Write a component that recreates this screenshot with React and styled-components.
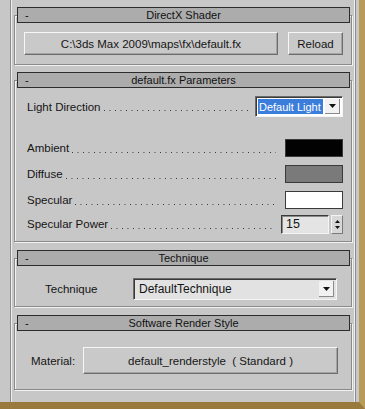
import styled, { createGlobalStyle } from "styled-components";

const GlobalStyle = createGlobalStyle`
  html, body {
    margin: 0;
    padding: 0;
    background: #c7c7c7;
  }
  body {
    font-family: "Liberation Sans", Arial, sans-serif;
    font-size: 11.5px;
    color: #151515;
  }
`;

const DownArrow = ({ w = 7, h = 4 }) => (
  <svg width={w} height={h} viewBox="0 0 7 4">
    <polygon points="0,0 7,0 3.5,4" fill="#111" />
  </svg>
);

const UpArrow = ({ w = 5, h = 3 }) => (
  <svg width={w} height={h} viewBox="0 0 5 3">
    <polygon points="0,3 5,3 2.5,0" fill="#111" />
  </svg>
);

const App = () => {
  return (
    <>
      <GlobalStyle />
      <Frame>
        <Sheet>
          <Rollout>
            <Header>
              <Collapse>-</Collapse>
              <Title>DirectX Shader</Title>
            </Header>
            <Body $pad="16px 8px 9px 9px">
              <ButtonRow>
                <PushButton $h={23} $grow>C:\3ds Max 2009\maps\fx\default.fx</PushButton>
                <PushButton $h={23} $w={55}>Reload</PushButton>
              </ButtonRow>
            </Body>
          </Rollout>

          <Rollout>
            <Header>
              <Collapse>-</Collapse>
              <Title>default.fx Parameters</Title>
            </Header>
            <Body $pad="15px 8px 8px 12px">
              <ParamRow $h={21}>
                <Label>Light Direction</Label>
                <Leader $mr={6} />
                <Combo $w={88} $h={21}>
                  <Selected>Default Light</Selected>
                  <ComboButton $light>
                    <DownArrow />
                  </ComboButton>
                </Combo>
              </ParamRow>
              <ParamRow $h={18} $mt={22}>
                <Label>Ambient</Label>
                <Leader $mr={9} />
                <Swatch $color="#020202" />
              </ParamRow>
              <ParamRow $h={18} $mt={8}>
                <Label>Diffuse</Label>
                <Leader $mr={9} />
                <Swatch $color="#7a7a7a" />
              </ParamRow>
              <ParamRow $h={18} $mt={8}>
                <Label>Specular</Label>
                <Leader $mr={9} />
                <Swatch $color="#ffffff" />
              </ParamRow>
              <ParamRow $h={18} $mt={6}>
                <Label>Specular Power</Label>
                <Leader $mr={7} />
                <Spinner>
                  <SpinField>15</SpinField>
                  <SpinArrows>
                    <UpArrow />
                    <DownArrow w={5} h={3} />
                  </SpinArrows>
                </Spinner>
              </ParamRow>
            </Body>
          </Rollout>

          <Rollout $gap={8}>
            <Header>
              <Collapse>-</Collapse>
              <Title>Technique</Title>
            </Header>
            <Body $pad="19px 14px 6px 30px">
              <ParamRow $h={22}>
                <Label>Technique</Label>
                <Combo $w={204} $h={22} $grey>
                  <Value>DefaultTechnique</Value>
                  <ComboButton $light>
                    <DownArrow />
                  </ComboButton>
                </Combo>
              </ParamRow>
            </Body>
          </Rollout>

          <Rollout $gap={8}>
            <Header>
              <Collapse>-</Collapse>
              <Title>Software Render Style</Title>
            </Header>
            <Body $pad="23px 13px 15px 16px">
              <ParamRow $h={27}>
                <Label>Material:</Label>
                <Spacer />
                <PushButton $h={27} $w={255}>
                  default_renderstyle&nbsp;&nbsp;( Standard )
                </PushButton>
              </ParamRow>
            </Body>
          </Rollout>
        </Sheet>
      </Frame>
    </>
  );
};

export default App;

const Frame = styled.div`
  box-sizing: border-box;
  width: 365px;
  height: 409px;
  background: #c7c7c7;
  border-right: 6px solid #b89a5a;
  border-bottom: 7px solid #9a7a3c;
  padding-left: 10px;
  display: flex;
`;

const Sheet = styled.div`
  box-sizing: border-box;
  width: 346px;
  border-left: 1px solid #8c8c8c;
  border-right: 1px solid #8c8c8c;
  box-shadow: inset 1px 0 #eeeeee, inset -1px 0 #eeeeee;
  padding: 7px 3px 0;
  display: flex;
  flex-direction: column;
`;

const Rollout = styled.section`
  display: flex;
  flex-direction: column;
  margin-top: ${(p) => (p.$gap !== undefined ? p.$gap : 7)}px;

  &:first-child {
    margin-top: 0;
  }
`;

const Header = styled.div`
  position: relative;
  z-index: 1;
  box-sizing: border-box;
  height: 16px;
  margin: 0 2px 0 3px;
  border: 1px solid #2c2c2c;
  background: #acacac;
  display: grid;
  grid-template-columns: 20px 1fr 20px;
  align-items: center;
  font-size: 11px;
  line-height: 14px;
  color: #111;
`;

const Collapse = styled.span`
  padding-left: 7px;
`;

const Title = styled.span`
  text-align: center;
  white-space: nowrap;
`;

const Body = styled.div`
  margin-top: -8px;
  border: 1px solid #8a8a8a;
  box-shadow: inset 1px 1px #f2f2f2, 1px 1px #f2f2f2;
  padding: ${(p) => p.$pad};
  display: flex;
  flex-direction: column;
`;

const ButtonRow = styled.div`
  display: flex;
  gap: 10px;
`;

const PushButton = styled.button`
  box-sizing: border-box;
  height: ${(p) => p.$h}px;
  ${(p) => (p.$grow ? "flex: 1;" : `width: ${p.$w}px;`)}
  padding: 0;
  background: #c9c9c9;
  border: 1px solid;
  border-color: #f6f6f6 #6c6c6c #6c6c6c #f6f6f6;
  box-shadow: inset -1px -1px #a4a4a4;
  font-family: "Liberation Sans", Arial, sans-serif;
  font-size: 11.5px;
  color: #151515;
  white-space: nowrap;
`;

const ParamRow = styled.div`
  display: flex;
  align-items: center;
  height: ${(p) => p.$h}px;
  margin-top: ${(p) => p.$mt || 0}px;
`;

const Label = styled.span`
  white-space: nowrap;
`;

const Leader = styled.span`
  flex: 1;
  height: 9px;
  margin: 0 ${(p) => p.$mr}px 0 3px;
  background: linear-gradient(to right, #333 1px, transparent 1px) left bottom / 5.5px 1px repeat-x;
`;

const Spacer = styled.span`
  flex: 1;
`;

const Combo = styled.div`
  box-sizing: border-box;
  width: ${(p) => p.$w}px;
  height: ${(p) => p.$h}px;
  margin-left: auto;
  display: flex;
  align-items: stretch;
  padding: 2px;
  background: ${(p) => (p.$grey ? "#e2e2e2" : "#ffffff")};
  border: 1px solid;
  border-color: #6a6a6a #f4f4f4 #f4f4f4 #6a6a6a;
  box-shadow: inset 1px 1px #3a3a3a;
`;

const Selected = styled.span`
  flex: 1;
  min-width: 0;
  display: flex;
  align-items: center;
  padding-left: 1px;
  background: #3b7ddb;
  color: #ffffff;
  font-size: 11px;
  white-space: nowrap;
  overflow: hidden;
`;

const Value = styled.span`
  flex: 1;
  display: flex;
  align-items: center;
  padding-left: 3px;
  font-size: 12px;
  white-space: nowrap;
`;

const ComboButton = styled.span`
  width: 14px;
  margin-left: 2px;
  display: flex;
  align-items: center;
  justify-content: center;
  background: ${(p) => (p.$light ? "#f2f2f2" : "#c9c9c9")};
  border-right: 1px solid #8a8a8a;
  border-bottom: 1px solid #8a8a8a;
`;

const Swatch = styled.span`
  box-sizing: border-box;
  width: 58px;
  height: 18px;
  background: ${(p) => p.$color};
  border: 1px solid #3a3a3a;
`;

const Spinner = styled.div`
  display: flex;
  align-items: stretch;
  height: 19px;
`;

const SpinField = styled.span`
  box-sizing: border-box;
  width: 48px;
  padding-left: 4px;
  display: flex;
  align-items: center;
  background: #e4e4e4;
  border: 1px solid;
  border-color: #3a3a3a #f4f4f4 #f4f4f4 #3a3a3a;
  box-shadow: inset 1px 1px #8a8a8a;
  font-size: 12.5px;
`;

const SpinArrows = styled.span`
  box-sizing: border-box;
  width: 12px;
  margin-left: 2px;
  display: flex;
  flex-direction: column;
  align-items: center;
  justify-content: center;
  gap: 3px;
  background: #d8d8d8;
  border: 1px solid;
  border-color: #f4f4f4 #7a7a7a #7a7a7a #f4f4f4;
`;
